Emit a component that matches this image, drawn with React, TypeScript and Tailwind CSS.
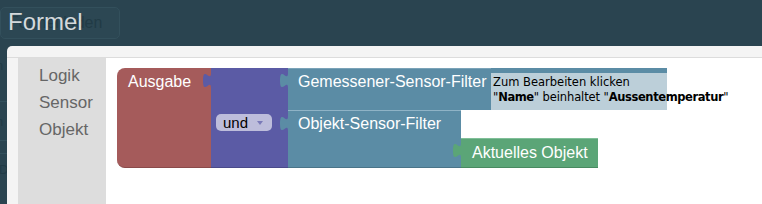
import React from "react";

const RED = "#a55b5b";
const PURPLE = "#5b5ba5";
const TEAL = "#5b8ca5";
const GREEN = "#5ba577";

// Blockly-style output tab that pokes into the block on the left
function Tab({ color, top }: { color: string; top: string }) {
  return (
    <svg
      width="9"
      height="16"
      viewBox="0 0 9 16"
      className={`absolute -left-[8px] ${top}`}
    >
      <path d="M9,0 L8,0 c0,10 -8,-8 -8,7.5 s8,-2.5 8,7.5 L9,15 Z" fill={color} />
    </svg>
  );
}

function Blocks() {
  return (
    <div className="absolute left-[11px] top-[10px] flex items-start font-['Liberation_Sans',Arial,sans-serif] text-[16px] leading-[18px] text-white">
      {/* Ausgabe */}
      <div className="h-[100px] w-[94px] rounded-l-[8px] border-b border-[#8a4a4a] bg-[#a55b5b] pl-[11px] pt-[5px]">
        Ausgabe
      </div>

      {/* und */}
      <div className="relative h-[100px] w-[77px] border-b border-[#4a4a8a] bg-[#5b5ba5] pl-[5px] pt-[46px]">
        <Tab color={PURPLE} top="top-[5px]" />
        <div className="flex h-[17px] w-[56px] items-center rounded-[5px] bg-[#bdbddb] pl-[7px] text-[15px] text-black">
          <span className="leading-[17px]">und</span>
          <svg width="6" height="5" viewBox="0 0 6 5" className="ml-[9px] mt-[1px]">
            <path d="M0,0 L6,0 L3,4 Z" fill="#7a7ab8" />
          </svg>
        </div>
      </div>

      <div className="flex flex-col">
        {/* Gemessener-Sensor-Filter + comment */}
        <div className="flex items-start">
          <div className="relative h-[42px] w-[203px] border-t border-[#7aa3b8] bg-[#5b8ca5] pl-[10px] pt-[4px]">
            <Tab color={TEAL} top="top-[4px]" />
            Gemessener-Sensor-Filter
          </div>
          <div className="h-[42px] w-[176px] border-t-[5px] border-[#5b8ca5] bg-[#bccfd9] pl-[2px] pt-[2px] font-['DejaVu_Sans',Verdana,sans-serif] text-[11.5px] leading-[15px] whitespace-nowrap text-black">
            <div>Zum Bearbeiten klicken</div>
            <div className="tracking-[-0.1px]">
              "<b className="tracking-[-0.4px]">Name</b>" beinhaltet "
              <b className="tracking-[-0.4px]">Aussentemperatur</b>"
            </div>
          </div>
        </div>

        {/* Objekt-Sensor-Filter + Aktuelles Objekt */}
        <div className="flex items-end">
          <div className="relative h-[58px] w-[173px] border-t border-b border-t-[#8fb3c6] border-b-[#4a7488] bg-[#5b8ca5] pl-[10px] pt-[4px]">
            <Tab color={TEAL} top="top-[5px]" />
            Objekt-Sensor-Filter
          </div>
          <div className="relative h-[30px] w-[137px] border-t border-b border-t-[#7fbf98] border-b-[#488a60] bg-[#5ba577] pl-[11px] pt-[5px]">
            <Tab color={GREEN} top="top-[4px]" />
            Aktuelles Objekt
          </div>
        </div>
      </div>
    </div>
  );
}

export default function App() {
  return (
    <div className="flex h-[204px] w-[762px] flex-col overflow-hidden bg-[#2a4450] font-['Liberation_Sans',Arial,sans-serif]">
      {/* page title, with the page's own button showing through */}
      <div className="relative h-[46px] shrink-0">
        <div className="absolute left-0 top-[7px] h-[32px] w-[120px] rounded-[5px] border border-[#33505c] bg-[#2c4753] pl-[8px] pt-[6px] text-[16px] leading-[18px] text-[#213b46]">
          Formel laden
        </div>
        <div className="relative pl-[8px] pt-[8px] text-[24px] leading-[28px] text-[#d4d9dc]">
          Formel
        </div>
      </div>

      <div className="flex flex-1">
        {/* page content under the dialog, cut off */}
        <div className="flex w-[7px] shrink-0 flex-col overflow-hidden text-[13px] leading-[14px] text-[#213b46]">
          <div className="mt-[13px] -ml-[4px]">h</div>
          <div className="mt-[28px] border-t border-[#33505c]" />
          <div className="mt-[13px] -ml-[4px]">h</div>
          <div className="mt-[11px] border-t border-[#33505c]" />
          <div className="mt-[12px] border-t border-[#33505c]" />
          <div className="mt-[9px] -ml-[1px]">D</div>
        </div>

        {/* dialog */}
        <div className="flex flex-1 flex-col rounded-tl-[5px] bg-[#f4f4f4]">
          <div className="h-[12px] shrink-0 border-b border-[#dcdcdc]" />
          <div className="flex flex-1 pl-[11px]">
            <div className="w-[88px] shrink-0 bg-[#dddddd] pl-[21px] pt-[4px] text-[17px] leading-[27px] text-[#666666]">
              <div>Logik</div>
              <div>Sensor</div>
              <div>Objekt</div>
            </div>
            <div className="relative flex-1 bg-white">
              <Blocks />
            </div>
          </div>
        </div>
      </div>
    </div>
  );
}
